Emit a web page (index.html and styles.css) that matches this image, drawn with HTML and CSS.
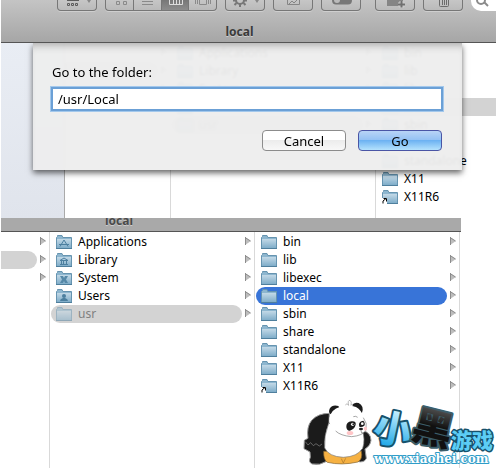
FILE: index.html
```html
<!DOCTYPE html>
<html lang="en">
<head>
    <meta charset="UTF-8">
    <meta name="viewport" content="width=device-width, initial-scale=1.0">
    <title>local</title>
    <link rel="stylesheet" href="styles.css">
</head>
<body>
    <!-- shared icons -->
    <svg class="defs" width="0" height="0" aria-hidden="true">
        <defs>
            <linearGradient id="folderFill" x1="0" y1="0" x2="0" y2="1">
                <stop offset="0" stop-color="#c3d9e7"/>
                <stop offset="1" stop-color="#7fadc9"/>
            </linearGradient>
            <symbol id="folder" viewBox="0 0 16 15">
                <path d="M.5 13.5V2.5L1.5 1.5V.5H6L6.8 2.5H15.5V13.5Z" fill="#8db6cf" stroke="#6694b0"/>
                <path d="M1 4H15V13H1Z" fill="url(#folderFill)"/>
                <path d="M0 13.5H16" stroke="#4f7f9d"/>
            </symbol>
            <symbol id="arrow" viewBox="0 0 6 8">
                <path d="M0 0L6 4L0 8Z" fill="#bdbdbd"/>
                <path d="M.5 0V8M0 .5L5.5 4" stroke="#8d8d8d" fill="none"/>
            </symbol>
        </defs>
    </svg>

    <section class="window">
        <header class="toolbar">
            <div class="tools">
                <button type="button" class="tool arrange" aria-label="Arrange">
                    <svg width="40" height="11" fill="none" stroke="#5c5c5c"><path d="M9 .5H21M9.500 3.500h2v2h-2zM13.500 3.500h2v2h-2zM17.500 3.500h2v2h-2z"/><path d="M29 0h4l-2 3z" fill="#888" stroke="none"/></svg>
                </button>
                <div class="segments">
                    <button type="button" class="tool" aria-label="Icons">
                        <svg width="29" height="11" fill="none" stroke="#8a8a8a"><path d="M10.500 1.500h3v3h-3zM17.500 1.500h3v3h-3z"/></svg>
                    </button>
                    <button type="button" class="tool" aria-label="List">
                        <svg width="27" height="11" stroke="#8a8a8a"><path d="M8 1.500h11M8 4.500h11"/></svg>
                    </button>
                    <button type="button" class="tool active" aria-label="Columns">
                        <svg width="28" height="11" fill="none" stroke="#ddd"><path d="M7.500 0V4.500H20.500V0M11.500 0V4M14.500 0V4M17.500 0V4"/></svg>
                    </button>
                    <button type="button" class="tool" aria-label="Cover Flow">
                        <svg width="28" height="11" fill="none" stroke="#8a8a8a"><path d="M6.500 0V4M8.500 0V4M10.500 0V4.500H17.500V0M19.500 0V4M21.500 0V4"/></svg>
                    </button>
                </div>
                <button type="button" class="tool" aria-label="Action">
                    <svg width="40" height="11" fill="none" stroke="#777"><circle cx="14" cy="0" r="4" stroke-width="2"/><path d="M14 4v3M10.500 3L8.500 5M17.500 3L19.500 5M7 .5h3M18 .5h3" stroke-width="2"/><path d="M29 0h4l-2 3z" fill="#888" stroke="none"/></svg>
                </button>
                <button type="button" class="tool" aria-label="Quick Look">
                    <svg width="40" height="11" fill="none" stroke="#858585"><path d="M13.500 0V4.500H25.500V0M15 4L18 1L20 3L23 0"/></svg>
                </button>
                <button type="button" class="tool" aria-label="Labels">
                    <svg width="40" height="11"><path d="M10 0H30Q30 4.500 26 4.500H14Q10 4.500 10 0Z" fill="#777"/><circle cx="15" cy="0" r="3" fill="#bbb"/></svg>
                </button>
                <button type="button" class="tool new-folder" aria-label="New Folder">
                    <svg width="40" height="11"><path d="M11 0H27V6H11Z" fill="#858585"/><path d="M25.500 1V8M22 4.500H29" stroke="#ccc" stroke-width="4"/><path d="M25.500 1V7.500M22 4.500H29" stroke="#707070" stroke-width="2"/></svg>
                </button>
                <button type="button" class="tool" aria-label="Delete">
                    <svg width="40" height="11" fill="none" stroke="#6c6c6c"><path d="M15.500 0V5.500Q15.500 6.500 16.500 6.500H23.500Q24.500 6.500 24.500 5.500V0M18.500 0V5M20.500 0V5M22.500 0V5"/></svg>
                </button>
                <label class="search">
                    <svg width="18" height="11" fill="none" stroke="#8b8b8b"><circle cx="10" cy="0" r="4" stroke-width="2"/><path d="M13 2L17 6" stroke-width="2"/></svg>
                    <input type="search" aria-label="Search">
                </label>
            </div>
            <h1>local</h1>
        </header>

        <div class="columns">
            <div class="sidebar"></div>
            <ul class="column volumes">
                <li><span class="item"></span><svg class="arrow"><use href="#arrow"/></svg></li>
                <li><span class="item picked"></span><svg class="arrow"><use href="#arrow"/></svg></li>
                <li><span class="item"></span><svg class="arrow"><use href="#arrow"/></svg></li>
            </ul>
            <ul class="column">
                <li><span class="item"><svg class="folder"><use href="#folder"/></svg>Applications</span><svg class="arrow"><use href="#arrow"/></svg></li>
                <li><span class="item"><svg class="folder"><use href="#folder"/></svg>Library</span><svg class="arrow"><use href="#arrow"/></svg></li>
                <li><span class="item"><svg class="folder"><use href="#folder"/></svg>System</span><svg class="arrow"><use href="#arrow"/></svg></li>
                <li><span class="item"><svg class="folder"><use href="#folder"/></svg>Users</span><svg class="arrow"><use href="#arrow"/></svg></li>
                <li><span class="item picked"><svg class="folder"><use href="#folder"/></svg>usr</span><svg class="arrow"><use href="#arrow"/></svg></li>
            </ul>
            <ul class="column last">
                <li><span class="item"><svg class="folder"><use href="#folder"/></svg>bin</span></li>
                <li><span class="item"><svg class="folder"><use href="#folder"/></svg>lib</span></li>
                <li><span class="item"><svg class="folder"><use href="#folder"/></svg>libexec</span></li>
                <li><span class="item picked"><svg class="folder"><use href="#folder"/></svg>local</span></li>
                <li><span class="item"><svg class="folder"><use href="#folder"/></svg>sbin</span></li>
                <li><span class="item"><svg class="folder"><use href="#folder"/></svg>share</span></li>
                <li><span class="item"><svg class="folder"><use href="#folder"/></svg>standalone</span></li>
                <li><span class="item"><svg class="folder"><use href="#folder"/></svg>X11</span></li>
                <li><span class="item"><svg class="folder"><use href="#folder"/><path d="M0 8H5V14H0Z" fill="#fff"/><path d="M1 13.500V11L4 8.500M1.500 8.500H4.500V11.500" stroke="#000" fill="none"/></svg>X11R6</span></li>
            </ul>

            <form class="sheet">
                <label for="path">Go to the folder:</label>
                <input type="text" id="path" name="path" value="/usr/Local">
                <div class="buttons">
                    <button type="button">Cancel</button>
                    <button type="submit" class="default">Go</button>
                </div>
            </form>
        </div>
    </section>

    <section class="window result">
        <header class="titlebar"><h2>local</h2></header>
        <div class="columns">
            <ul class="column volumes">
                <li><span class="item"></span><svg class="arrow"><use href="#arrow"/></svg></li>
                <li><span class="item picked"></span><svg class="arrow"><use href="#arrow"/></svg></li>
                <li><span class="item"></span><svg class="arrow"><use href="#arrow"/></svg></li>
            </ul>
            <ul class="column">
                <li><span class="item"><svg class="folder"><use href="#folder"/><path d="M4 11.500L8 5L12 11.500M3 9.500H13" stroke="#4c7f9f" fill="none"/></svg>Applications</span><svg class="arrow"><use href="#arrow"/></svg></li>
                <li><span class="item"><svg class="folder"><use href="#folder"/><path d="M4 7.500L8 5L12 7.500ZM4 11.500H12M5.500 8V11M7.500 8V11M10.500 8V11" stroke="#4c7f9f" fill="none"/></svg>Library</span><svg class="arrow"><use href="#arrow"/></svg></li>
                <li><span class="item"><svg class="folder"><use href="#folder"/><path d="M4 5H7L8 7L9 5H12L10 8.500L12 12H9L8 10L7 12H4L6 8.500Z" fill="#5588a7"/></svg>System</span><svg class="arrow"><use href="#arrow"/></svg></li>
                <li><span class="item"><svg class="folder"><use href="#folder"/><circle cx="8" cy="7" r="2" fill="#4c7f9f"/><path d="M4 12Q4 10 7 9H9Q12 10 12 12Z" fill="#4c7f9f"/></svg>Users</span><svg class="arrow"><use href="#arrow"/></svg></li>
                <li><span class="item picked"><svg class="folder"><use href="#folder"/></svg>usr</span><svg class="arrow"><use href="#arrow"/></svg></li>
            </ul>
            <ul class="column">
                <li><span class="item"><svg class="folder"><use href="#folder"/></svg>bin</span><svg class="arrow"><use href="#arrow"/></svg></li>
                <li><span class="item"><svg class="folder"><use href="#folder"/></svg>lib</span><svg class="arrow"><use href="#arrow"/></svg></li>
                <li><span class="item"><svg class="folder"><use href="#folder"/></svg>libexec</span><svg class="arrow"><use href="#arrow"/></svg></li>
                <li><span class="item selected"><svg class="folder"><use href="#folder"/></svg>local</span><svg class="arrow"><use href="#arrow"/></svg></li>
                <li><span class="item"><svg class="folder"><use href="#folder"/></svg>sbin</span><svg class="arrow"><use href="#arrow"/></svg></li>
                <li><span class="item"><svg class="folder"><use href="#folder"/></svg>share</span><svg class="arrow"><use href="#arrow"/></svg></li>
                <li><span class="item"><svg class="folder"><use href="#folder"/></svg>standalone</span><svg class="arrow"><use href="#arrow"/></svg></li>
                <li><span class="item"><svg class="folder"><use href="#folder"/></svg>X11</span><svg class="arrow"><use href="#arrow"/></svg></li>
                <li><span class="item"><svg class="folder"><use href="#folder"/><path d="M0 8H5V14H0Z" fill="#fff"/><path d="M1 13.500V11L4 8.500M1.500 8.500H4.500V11.500" stroke="#000" fill="none"/></svg>X11R6</span><svg class="arrow"><use href="#arrow"/></svg></li>
            </ul>
        </div>
    </section>

    <!-- site watermark -->
    <svg class="watermark" width="196" height="73" viewBox="0 0 196 73">
        <defs>
            <linearGradient id="blue" x1="0" y1="0" x2="0" y2="1">
                <stop offset="0.2" stop-color="#c5f0ff"/>
                <stop offset="0.9" stop-color="#1ba6e6"/>
            </linearGradient>
            <linearGradient id="dark" x1="0" y1="0" x2="0" y2="1">
                <stop offset="0" stop-color="#777"/>
                <stop offset=".5" stop-color="#111"/>
            </linearGradient>
        </defs>
        <g transform="translate(-10 -5) scale(.3333)" stroke-linejoin="round">
            <path d="M118 70Q84 70 65 91Q49 110 54 145L43 151L42 176L60 186L61 202Q54 216 66 222Q90 227 110 214L116 140Z" fill="#1b1b1b" stroke="#999" stroke-width="3"/>
            <path d="M46 155L54 165L62 158L70 167L78 161L88 168L96 162" fill="none" stroke="#888" stroke-width="2"/>
            <path d="M220 123Q242 127 243 151Q241 168 225 177L229 205Q223 220 201 214L198 145Z" fill="#1b1b1b" stroke="#999" stroke-width="3"/>
            <path d="M101 184Q100 210 112 217Q155 227 204 216Q219 207 214 183Z" fill="#f6b142" stroke="#80602c" stroke-width="2"/>
            <path d="M154 206L160 219L167 205" fill="none" stroke="#a8742a" stroke-width="2"/>
            <path d="M116 100Q101 139 104 174Q116 200 160 202Q203 200 218 175Q227 148 216 120Z" fill="#fff" stroke="#777" stroke-width="2"/>
            <path d="M125 74Q113 70 119 56Q127 43 145 48L150 56Z" fill="#1b1b1b"/>
            <path d="M186 46Q192 35 206 39Q223 48 216 68L207 69Z" fill="#1b1b1b"/>
            <path d="M118 84Q125 57 149 51Q175 42 198 51Q215 59 220 83Q233 99 228 120Q219 137 185 140Q151 137 137 123Q114 105 118 84Z" fill="#fff"/>
            <path d="M220 83Q233 99 228 120Q219 137 185 140Q151 137 137 123" fill="none" stroke="#777" stroke-width="2"/>
            <path d="M166 45Q171 37 176 46Q172 31 180 31Q186 34 183 46Q188 38 188 49" fill="#fff" stroke="#999" stroke-width="2"/>
            <path d="M169 111Q168 96 185 94Q199 93 197 104Q194 117 179 122Q170 122 169 111ZM207 104Q207 94 220 92Q227 99 223 107Q215 113 208 110Z" fill="#1b1b1b"/>
            <circle cx="188" cy="103" r="5" fill="#fff"/>
            <circle cx="190" cy="103" r="3" fill="#222"/>
            <circle cx="217" cy="101" r="4" fill="#fff"/>
            <ellipse cx="213" cy="117" rx="6" ry="4" fill="#222"/>
            <path d="M213 121L215 129L222 127M190 80L197 79L203 82" fill="none" stroke="#777" stroke-width="2"/>
            <ellipse cx="180" cy="129" rx="10" ry="6" fill="#ffc5c7"/>
            <ellipse cx="226" cy="116" rx="5" ry="6" fill="#ffc5c7"/>
        </g>
        <g class="brand">
            <text class="xiao" x="74" y="48" transform="rotate(12 93 34)">小</text>
            <text class="hei" x="113" y="48" transform="rotate(14 133 33)">黑</text>
            <text class="game" x="151" y="53">游戏</text>
            <text class="site" x="74" y="68">www.xiaohei.com</text>
        </g>
    </svg>
</body>
</html>
```
FILE: styles.css
```css
body {
    margin: 0;
    position: relative;
    background-color: #fff;
    font-family: "Noto Sans", "Open Sans", sans-serif;
    font-size: 12px;
    line-height: 18px;
    color: #000;
}
button, input {
    font-family: inherit;
    font-size: inherit;
}
.defs {
    position: absolute;
}
.window {
    margin-left: 1px;
    overflow: hidden;
}
.result {
    margin-right: 35px;
}

/* toolbar */
.toolbar {
    height: 42px;
    background: linear-gradient(#c4c4c4, #a6a6a6);
    border-bottom: 1px solid #555;
}
.tools {
    display: flex;
    gap: 8px;
    height: 11px;
    padding-left: 56px;
}
.tool {
    flex: none;
    height: 11px;
    padding: 0;
    border: 1px solid #777;
    border-top: none;
    border-radius: 0 0 4px 4px;
    background: linear-gradient(#c6c6c6, #bababa);
    box-shadow: 0 1px 0 #cfcfcf;
    overflow: hidden;
    box-sizing: border-box;
    width: 40px;
}
.tool svg {
    display: block;
}
.segments {
    display: flex;
    width: 112px;
}
.segments .tool {
    flex: 1;
    border-radius: 0;
    border-right: none;
}
.segments .tool:first-child {
    border-radius: 0 0 0 4px;
}
.segments .tool:last-child {
    border-radius: 0 0 4px 0;
    border-right: 1px solid #777;
}
.segments .active {
    background: linear-gradient(#777, #8c8c8c);
}
.new-folder {
    margin-left: 6px;
}
.search {
    flex: 1;
    display: flex;
    height: 11px;
    border-radius: 0 0 0 10px;
    background-color: #fff;
    overflow: hidden;
}
.search svg {
    flex: none;
}
.search input {
    flex: 1;
    min-width: 0;
    padding: 0;
    border: none;
    background: none;
}
h1, h2 {
    margin: 0;
    font-size: 12px;
    line-height: 18px;
    color: #3a3a3a;
    text-shadow: 0 1px 0 #ccc;
}
h1 {
    margin-top: 12px;
    padding-right: 18px;
    text-align: center;
}
.titlebar {
    display: flex;
    align-items: flex-end;
    height: 14px;
    padding-left: 104px;
    padding-bottom: 1px;
    box-sizing: border-box;
    background-color: #a9a9a9;
    border-bottom: 1px solid #555;
    overflow: hidden;
}
.titlebar h2 {
    color: #4a4a4a;
}

/* columns */
.columns {
    position: relative;
    display: flex;
    height: 175px;
}
.result .columns {
    height: 236px;
}
.sidebar {
    width: 63px;
    border-right: 1px solid #aaa;
    background: linear-gradient(#e9edf4, #e0e4ec);
}
.column {
    flex: none;
    width: 204px;
    margin: 0;
    padding: 1px 0 0;
    border-right: 1px solid #d9d9d9;
    list-style: none;
}
.column.volumes {
    width: 105px;
}
.result .volumes {
    width: 48px;
}
.column.last {
    flex: 1;
    border-right: none;
}
.column li {
    display: flex;
    height: 18px;
}
.item {
    flex: 1;
    display: flex;
    gap: 6px;
    margin: 0 3px 0 1px;
    padding-left: 5px;
    border-radius: 9px;
    white-space: nowrap;
}
.volumes .item {
    margin-left: 0;
    border-radius: 0 9px 9px 0;
}
.last .item {
    margin-right: 0;
}
.picked {
    background-color: #d3d3d3;
    color: #808080;
}
.picked .folder {
    opacity: 0.5;
}
.selected {
    background-color: #3874d8;
    color: #fff;
}
.last .picked {
    border-radius: 9px 0 0 9px;
}
.folder {
    flex: none;
    width: 16px;
    height: 15px;
    margin-top: 2px;
}
.arrow {
    flex: none;
    width: 6px;
    height: 8px;
    margin: 4px 3px 0 0;
}

/* go to folder sheet */
.sheet {
    position: absolute;
    top: 0;
    left: 32px;
    right: 34px;
    height: 127px;
    box-sizing: border-box;
    padding: 20px 20px 0 19px;
    background-color: rgba(237, 237, 237, 0.96);
    box-shadow: 0 3px 6px rgba(0, 0, 0, 0.6), inset 0 8px 8px -6px rgba(0, 0, 0, 0.3);
    clip-path: inset(0 -10px -12px -10px);
    backdrop-filter: blur(1px);
}
.sheet label {
    display: block;
    font-size: 13px;
}
.sheet input {
    display: block;
    width: 100%;
    height: 22px;
    margin-top: 7px;
    padding: 0 5px;
    box-sizing: border-box;
    border: 1px solid #6ba0d6;
    outline: 1px solid #6ba0d6;
    box-shadow: 0 0 0 2px #a3c8ec;
    background-color: #fff;
    font-size: 13px;
}
.buttons {
    display: flex;
    justify-content: flex-end;
    gap: 12px;
    margin-top: 20px;
}
.buttons button {
    width: 84px;
    height: 21px;
    padding: 0;
    border: 1px solid #8c8c8c;
    border-radius: 4px;
    background: linear-gradient(#fff 50%, #ececec 50%, #f8f8f8);
    font-size: 13px;
    line-height: 18px;
}
.buttons .default {
    border-color: #4a55a5;
    background: linear-gradient(#b9d4f6, #92c0f3 50%, #6db2f2 50%, #b4e2fd);
}

/* watermark */
.watermark {
    position: absolute;
    right: 0;
    bottom: 0;
}
.brand text {
    font-family: "Noto Sans CJK SC", sans-serif;
    font-weight: 900;
    paint-order: stroke;
    stroke: #17526b;
    stroke-width: 4px;
    stroke-linejoin: round;
    fill: url(#blue);
}
.brand .xiao {
    font-size: 38px;
}
.brand .hei {
    font-size: 40px;
    fill: url(#dark);
    stroke: #3c5e6a;
}
.brand .game {
    font-size: 21px;
    stroke-width: 3px;
    fill: #5ccdf5;
}
.brand .site {
    font-family: "DejaVu Serif", serif;
    font-size: 12px;
    font-weight: bold;
    fill: #fff;
    stroke: #2f9dc8;
    stroke-width: 2px;
}
```
